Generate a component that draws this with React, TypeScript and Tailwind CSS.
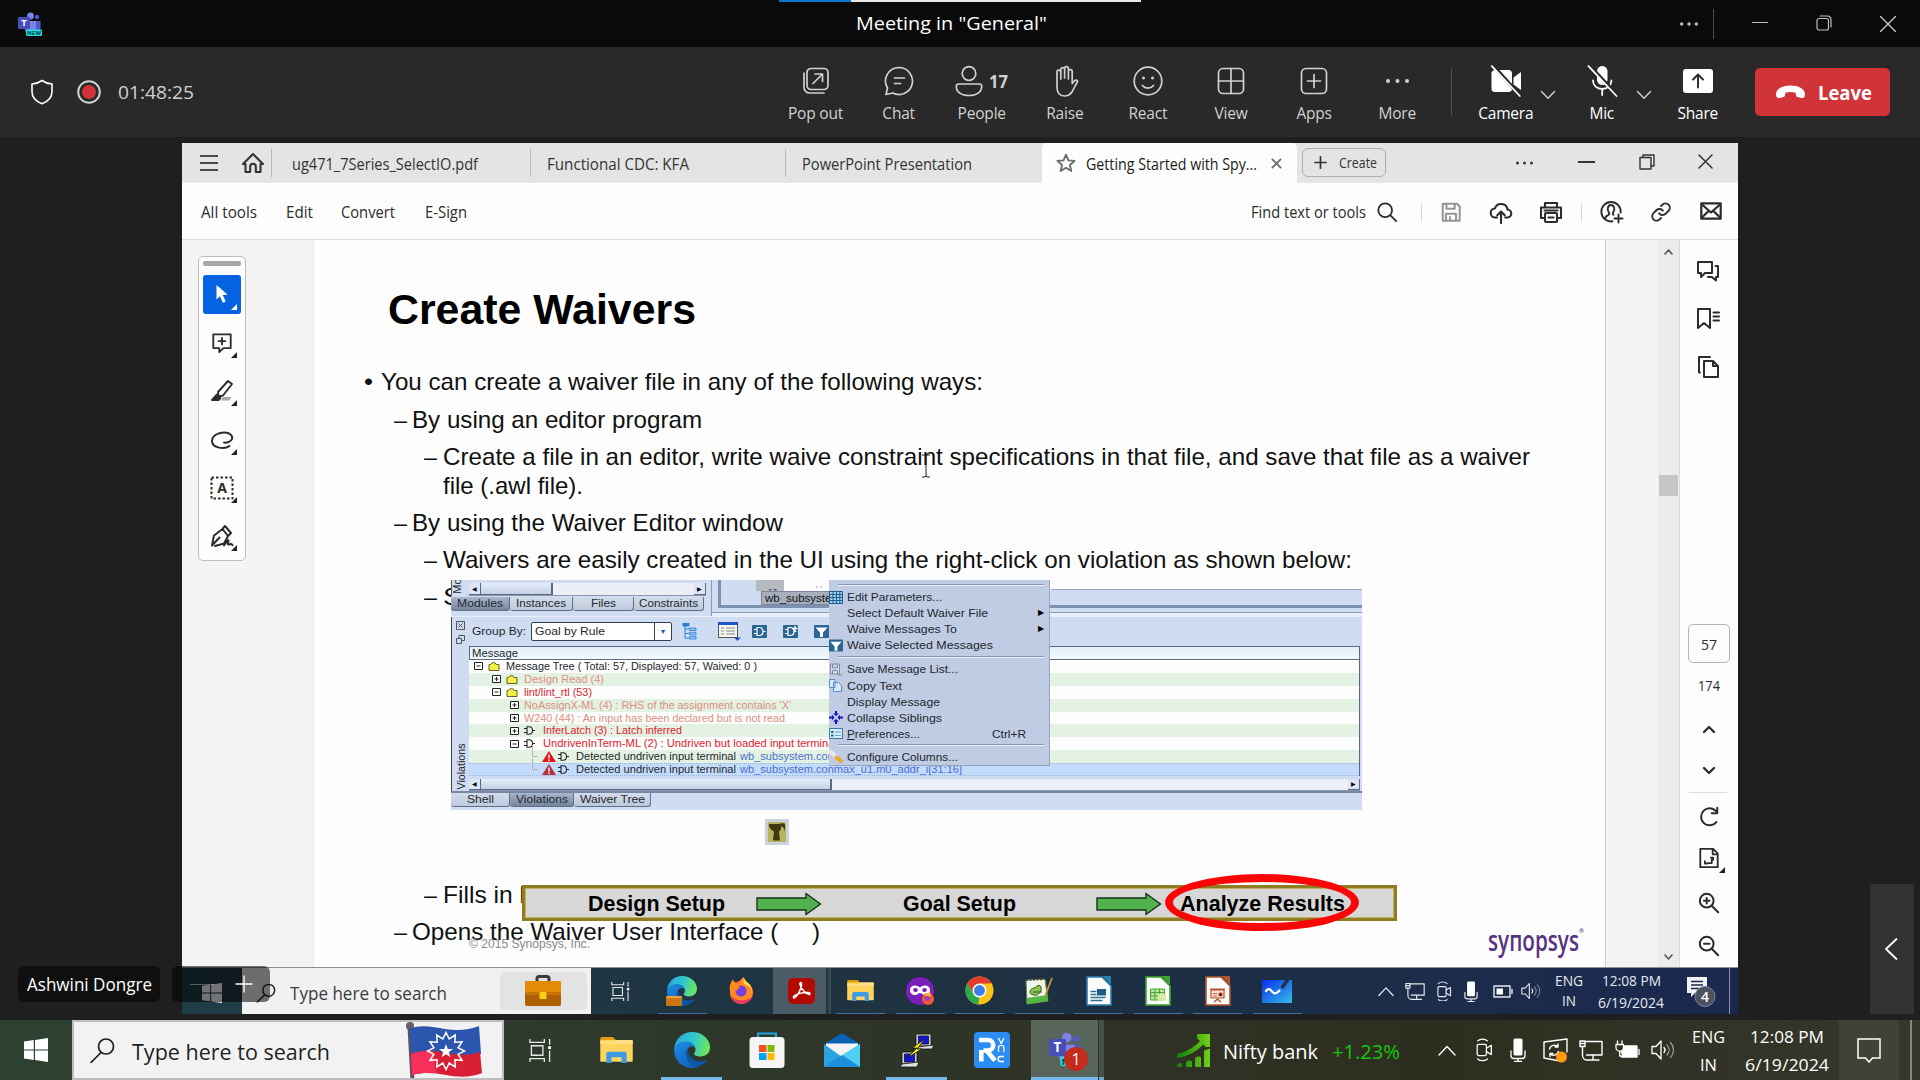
import React, { useLayoutEffect, useRef, useState } from "react";

type Kids = { children?: React.ReactNode };

/* One line of text set to an exact advance width. */
function Fit({ w, className = "", children }: { w: number; className?: string } & Kids) {
  const ref = useRef<HTMLSpanElement>(null);
  const [scale, setScale] = useState(1);
  useLayoutEffect(() => {
    if (!ref.current) return;
    const natural = parseFloat(getComputedStyle(ref.current).width);
    if (natural > 0) setScale(w / natural);
  }, [w]);
  return (
    <span className={`inline-block shrink-0 whitespace-pre ${className}`} style={{ width: w }}>
      <span ref={ref} className="inline-block origin-left" style={{ transform: `scaleX(${scale})` }}>
        {children}
      </span>
    </span>
  );
}

function Ico({
  w = 24,
  h,
  vb = "0 0 24 24",
  sw = 1.5,
  className = "",
  fill = "none",
  children,
}: { w?: number; h?: number; vb?: string; sw?: number; className?: string; fill?: string } & Kids) {
  return (
    <svg
      width={w}
      height={h ?? w}
      viewBox={vb}
      fill={fill}
      stroke="currentColor"
      strokeWidth={sw}
      strokeLinecap="round"
      strokeLinejoin="round"
      className={`shrink-0 ${className}`}
    >
      {children}
    </svg>
  );
}

const Dots = ({ w, r = 1.3, className = "" }: { w: number; r?: number; className?: string }) => (
  <Ico w={w} h={8} vb={`0 0 ${w} 8`} className={className}>
    <g fill="currentColor" stroke="none">
      <circle cx={r} cy="4" r={r} />
      <circle cx={w / 2} cy="4" r={r} />
      <circle cx={w - r} cy="4" r={r} />
    </g>
  </Ico>
);

/* ---------- Teams title bar ---------- */

function TeamsLogo({ w = 24 }: { w?: number }) {
  return (
    <svg width={w} height={w} viewBox="0 0 24 24" className="shrink-0">
      <circle cx="12.5" cy="4" r="3.4" fill="#7b83eb" />
      <circle cx="19" cy="5" r="2.2" fill="#5059c9" />
      <path d="M15 9h7.500v9a3 3 0 0 1-3 3H15z" fill="#5059c9" />
      <path d="M7 9h11v8a5.500 5.500 0 0 1-11 0z" fill="#7b83eb" />
      <rect x="0" y="5" width="12" height="12" rx="1" fill="#464eb8" />
      <text x="6" y="14.400" textAnchor="middle" fontSize="9.500" fontWeight="700" fill="#fff" fontFamily="Open Sans, sans-serif">T</text>
      <rect x="8" y="17.500" width="16" height="6.500" rx="1.500" fill="#22e0e6" />
      <text x="16" y="23" textAnchor="middle" fontSize="6" fontWeight="700" fill="#03363d" fontFamily="Open Sans, sans-serif">NEW</text>
    </svg>
  );
}

function TitleBar() {
  return (
    <header className="relative flex h-[47px] items-center bg-[#0a0a0a] text-[#bdbdbd]">
      <div className="absolute left-[779px] top-0 flex h-[2px] w-[362px] bg-[#e6e6e6]">
        <div className="w-[72px] bg-[#0078d4]" />
      </div>
      <div className="ml-[18px]"><TeamsLogo /></div>
      <Fit w={191} className="ml-[814px] mb-px text-[19px] leading-6 text-white">Meeting in "General"</Fit>
      <Dots w={18} r={1.7} className="ml-[633px]" />
      <div className="ml-[15px] h-[30px] w-px bg-[#4a4a4a]" />
      <div className="ml-[38px] mb-[2px] h-[1.5px] w-4 bg-[#bdbdbd]" />
      <Ico w={16} vb="0 0 16 16" sw={1.2} className="ml-12 mb-px">
        <rect x="1" y="3.500" width="11.500" height="11.500" rx="2" />
        <path d="M4 1h7.500A3.500 3.500 0 0 1 15 4.500V12" />
      </Ico>
      <Ico w={16} vb="0 0 16 16" sw={1.2} className="ml-12 text-[#d0d0d0]"><path d="M.5.500l15 15M15.500.500l-15 15" /></Ico>
    </header>
  );
}

/* ---------- Meeting toolbar ---------- */

function Tool({ label, children, bright = false, wide = true }: { label: string; bright?: boolean; wide?: boolean } & Kids) {
  return (
    <div className={`flex h-full shrink-0 flex-col items-center pt-[18px] ${wide ? "w-[83.100px]" : "w-[60px]"} ${bright ? "text-white" : "text-[#d1d1d1]"}`}>
      <div className="flex h-8 items-center justify-center gap-2">{children}</div>
      <span className="mt-[4px] text-[15.500px] leading-6 tracking-[-0.200px] whitespace-nowrap">{label}</span>
    </div>
  );
}

const Chev = ({ className = "" }: { className?: string }) => (
  <Ico w={16} h={10} vb="0 0 16 10" sw={1.4} className={className}><path d="M1.500 1.500 8 8.200l6.500-6.700" /></Ico>
);

function MeetingBar() {
  return (
    <div className="flex h-[90px] items-center bg-[#292929] text-[#d1d1d1]">
      <Ico w={24} h={26} vb="0 0 24 26" sw={1.6} className="ml-[30px] text-white">
        <path d="M12 1.500c3 2.200 6.200 3.300 10 3.500v7.500c0 6-3.800 10-10 12.200C5.800 22.500 2 18.500 2 12.500V5c3.800-.2 7-1.300 10-3.500z" />
      </Ico>
      <Ico w={28} vb="0 0 28 28" sw={2} className="ml-[21px]">
        <circle cx="14" cy="14" r="10.800" />
        <circle cx="14" cy="14" r="7" fill="#d13438" stroke="none" />
      </Ico>
      <Fit w={76} className="ml-[15px] text-[19px] leading-6">01:48:25</Fit>
      <div className="w-[580px] shrink-0" />
      <Tool label="Pop out">
        <Ico w={30} vb="0 0 30 30" sw={1.700}>
          <rect x="6" y="2.500" width="21" height="21" rx="4" />
          <path d="M3 7v14.500a5.500 5.500 0 0 0 5.500 5.500H23M12 17.500l9-9M14 8h7.500v7.500" />
        </Ico>
      </Tool>
      <Tool label="Chat">
        <Ico w={32} vb="0 0 32 32" sw={1.700}>
          <path d="M16 2.500a13.500 13.500 0 1 1-6.200 25.500L3 29.500l1.500-6.500A13.500 13.500 0 0 1 16 2.500zM11.500 13h10M11.500 18.500h6" />
        </Ico>
      </Tool>
      <Tool label="People">
        <Ico w={28} h={32} vb="0 0 28 32" sw={1.700}>
          <circle cx="14" cy="8.500" r="6.800" />
          <path d="M3.500 19h21a2.200 2.200 0 0 1 2.200 2.200c0 6-5 9.300-12.700 9.300S1.300 27.200 1.300 21.200A2.200 2.200 0 0 1 3.500 19z" />
        </Ico>
        <Fit w={19} className="-ml-[2px] text-[18px] font-bold leading-6">17</Fit>
      </Tool>
      <Tool label="Raise">
        <Ico w={28} h={32} vb="0 0 28 32" sw={1.700}>
          <path d="M6 17V7a1.900 1.900 0 0 1 3.800 0v7M9.800 14V4.500a1.900 1.900 0 0 1 3.800 0V13M13.600 13V3.500a1.900 1.900 0 0 1 3.800 0V14M17.400 14V6.500a1.900 1.900 0 0 1 3.800 0V18.500M21.200 18.500l2.300-2.700c1.500-1.600 3.800-.2 2.600 1.700-2.400 4-3.600 7-5.200 9.500-2.100 3.300-4.700 4-7.400 4-5 0-7.500-3.500-7.500-9V15" />
        </Ico>
      </Tool>
      <Tool label="React">
        <Ico w={32} vb="0 0 32 32" sw={1.700}>
          <circle cx="16" cy="16" r="13.800" />
          <path d="M10.500 20.500c2.800 3.600 8.200 3.600 11 0" />
          <circle cx="11.500" cy="13" r="1.500" fill="currentColor" stroke="none" />
          <circle cx="20.500" cy="13" r="1.500" fill="currentColor" stroke="none" />
        </Ico>
      </Tool>
      <Tool label="View">
        <Ico w={28} vb="0 0 28 28" sw={1.700}><rect x="1.500" y="1.500" width="25" height="25" rx="4.500" /><path d="M14 1.500v25M1.500 14h25" /></Ico>
      </Tool>
      <Tool label="Apps">
        <Ico w={28} vb="0 0 28 28" sw={1.700}><rect x="1.500" y="1.500" width="25" height="25" rx="4.500" /><path d="M14 7.500v13M7.500 14h13" /></Ico>
      </Tool>
      <Tool label="More"><Dots w={23} r={2} /></Tool>
      <div className="ml-3 h-12 w-px shrink-0 bg-[#525252]" />
      <div className="w-6 shrink-0" />
      <Tool label="Camera" bright wide={false}>
        <Ico w={32} vb="0 0 32 32" sw={1.800}>
          <path d="M4 5h14.500A3.500 3.500 0 0 1 22 8.500v15a3.500 3.500 0 0 1-3.500 3.500H5a3.500 3.500 0 0 1-3.500-3.500V7z" fill="currentColor" stroke="none" />
          <path d="M23.500 12.500 31 7v18l-7.500-5.500z" fill="currentColor" stroke="none" />
          <path d="M3.500 1 31 31.500" stroke="#292929" strokeWidth="3.500" />
          <path d="M1.800 1.200 29.800 31" />
        </Ico>
      </Tool>
      <Chev className="ml-1 mt-[6px]" />
      <div className="w-4 shrink-0" />
      <Tool label="Mic" bright wide={false}>
        <Ico w={32} vb="0 0 32 32" sw={1.800}>
          <rect x="11" y="1" width="10.500" height="19" rx="5.200" fill="currentColor" stroke="none" />
          <path d="M7 15.500c0 5 4 8.500 9.200 8.500s9.200-3.500 9.200-8.500M16.200 24v6" />
          <path d="M4 1 32 31" stroke="#292929" strokeWidth="3.500" />
          <path d="M2.500 1.200 30.500 31" />
        </Ico>
      </Tool>
      <Chev className="ml-1 mt-[6px]" />
      <div className="w-[16px] shrink-0" />
      <Tool label="Share" bright wide={false}>
        <Ico w={32} h={26} vb="0 0 32 26" sw={1.900}>
          <rect x="1" y="1" width="30" height="24" rx="3" fill="currentColor" stroke="none" />
          <path d="M16 19.500V6.500M11 11.500l5-5 5 5" stroke="#292929" />
        </Ico>
      </Tool>
      <div className="ml-[27px] flex h-12 w-[135px] shrink-0 items-center rounded-[5px] bg-[#d13438] pl-5 text-white">
        <Ico w={31} h={16} vb="0 0 31 16">
          <path d="M15.500 1.500C8 1.500 1 4.500 1 10.200c0 3 1.400 4 3.500 3.700l3.200-.6c1.800-.3 2.500-1.400 2.500-3V8.700c3.400-1 7.200-1 10.600 0v1.600c0 1.600.7 2.700 2.500 3l3.200.6c2.100.3 3.500-.7 3.500-3.700 0-5.700-7-8.700-14.500-8.700z" fill="currentColor" stroke="none" />
        </Ico>
        <Fit w={54} className="ml-3 mt-px text-[19px] font-bold leading-6">Leave</Fit>
      </div>
    </div>
  );
}

/* ---------- PDF reader chrome ---------- */

const Sep = ({ className = "" }: { className?: string }) => <div className={`w-px shrink-0 bg-[#b9b9b9] ${className}`} />;

function PdfTabs() {
  return (
    <div className="flex h-10 items-center border-b border-[#e9e9e9] bg-[#e4e4e4] text-[16px] leading-6 text-[#333]">
      <div className="ml-[18px] flex w-[18px] flex-col gap-[5px]">
        <div className="h-[2px] bg-[#4a4a4a]" /><div className="h-[2px] bg-[#4a4a4a]" /><div className="h-[2px] bg-[#4a4a4a]" />
      </div>
      <Ico w={24} h={22} vb="0 0 24 22" sw={2.100} className="ml-[23px]">
        <path d="M12 2 2 12h2.500v8h4.700v-5.500a2.800 2.800 0 0 1 5.600 0V20h4.700v-8H22z" />
      </Ico>
      <Sep className="ml-[6px] h-7" />
      <Fit w={186} className="ml-[20px] mt-[2px]">ug471_7Series_SelectIO.pdf</Fit>
      <Sep className="ml-[52px] h-7" />
      <Fit w={142} className="ml-[16px] mt-[2px]">Functional CDC: KFA</Fit>
      <Sep className="ml-[96px] h-7" />
      <Fit w={170} className="ml-[16px] mt-[2px]">PowerPoint Presentation</Fit>
      <div className="ml-[70px] -mb-[2px] flex h-10 w-[255px] shrink-0 items-center self-start rounded-t-[5px] bg-[#fdfdfd] pl-[14px] text-[#1c1c1c]">
        <Ico w={20} vb="0 0 24 24" sw={2.200} className="text-[#6b6b6b]">
          <path d="m12 2 2.900 6.900 7.400.6-5.600 4.900 1.700 7.300L12 17.800l-6.400 3.900 1.700-7.300-5.600-4.900 7.400-.6z" />
        </Ico>
        <Fit w={171} className="ml-[10px] mt-px">Getting Started with Spy...</Fit>
        <Ico w={11} vb="0 0 12 12" sw={2} className="ml-[14px] text-[#6b6b6b]"><path d="m1.500 1.500 9 9M10.500 1.500l-9 9" /></Ico>
      </div>
      <div className="ml-[5px] flex h-[29px] w-[84px] shrink-0 items-center rounded-[6px] border border-[#aeaeae] pl-[11px]">
        <Ico w={13} vb="0 0 12 12" sw={1.600}><path d="M6 .8v10.400M.8 6h10.400" /></Ico>
        <Fit w={38} className="ml-[12px] text-[14px] leading-5">Create</Fit>
      </div>
      <Dots w={17} r={1.500} className="ml-[130px]" />
      <div className="ml-[45px] mb-px h-[1.500px] w-[17px] shrink-0 bg-[#333]" />
      <Ico w={16} vb="0 0 16 16" sw={1.400} className="ml-[44px] mb-[2px]"><rect x="1" y="3.500" width="11" height="11.500" /><path d="M4 3.500V1h11v11h-3" /></Ico>
      <Ico w={15} vb="0 0 15 15" sw={1.500} className="ml-[43px] mb-[3px]"><path d="m1 1 13 13M14 1 1 14" /></Ico>
    </div>
  );
}

function PdfToolbar() {
  return (
    <div className="flex h-[57px] items-center border-b border-[#dcdcdc] bg-[#fdfdfd] pt-[2px] text-[15.500px] leading-6 text-[#2c2c2c]">
      <Fit w={56} className="ml-[19px]">All tools</Fit>
      <Fit w={27} className="ml-[29px]">Edit</Fit>
      <Fit w={54} className="ml-[28px]">Convert</Fit>
      <Fit w={42} className="ml-[30px]">E-Sign</Fit>
      <Fit w={115} className="ml-[784px]">Find text or tools</Fit>
      <Ico w={22} sw={2} className="ml-[10px]"><circle cx="10" cy="10" r="7.500" /><path d="m15.500 15.500 6.500 6.500" /></Ico>
      <Sep className="ml-[23px] h-[19px] bg-[#d8d8d8]" />
      <Ico w={22} sw={2.200} className="ml-[18px] text-[#959595]"><path d="M3 3h15.500L21.500 6v15.500h-18.500zM7 3v5.500h9V3M6.500 21.500V14h11v7.500M11 17.500v4" /></Ico>
      <Ico w={24} sw={2.100} className="ml-[27px]">
        <path d="M8 17.500H6.500a4.500 4.500 0 0 1-.6-9A6.500 6.500 0 0 1 18.500 9.500a4 4 0 0 1-.5 8h-1.800M12 23V12M8.300 15.200 12 11.500l3.700 3.700" />
      </Ico>
      <Ico w={24} sw={2.100} className="ml-[26px]"><path d="M6 7V3h12v4M6 18H2V7.500h20V18h-4" /><rect x="6" y="13" width="12" height="9" rx="1" /><path d="M9.500 17.500h5M5.500 10.500h13" /></Ico>
      <Sep className="ml-[18px] h-[19px] bg-[#d8d8d8]" />
      <Ico w={24} sw={1.900} className="ml-[18px]">
        <path d="M12.500 21.300A9.700 9.700 0 1 1 20.700 12.500M5 18.500c.6-2.200 2-3.200 3.600-3.700.9-.3.9-1.300.3-2.200C6.500 9 8 5 11 5s4.500 4 2.200 7.500c-.6 1-.6 2 .3 2.300M18.500 14.500v8M14.500 18.500h8" />
      </Ico>
      <Ico w={22} sw={2.100} className="ml-[26px]">
        <path d="M10 13.500a4.800 4.800 0 0 0 7 .4l3.200-3.200a4.700 4.700 0 0 0-6.700-6.700L12 5.500M14 10.500a4.800 4.800 0 0 0-7-.4l-3.200 3.200a4.700 4.700 0 0 0 6.700 6.700L12 18.500" />
      </Ico>
      <Ico w={22} h={18} vb="0 0 22 18" sw={2.200} className="ml-[28px] mb-[2px]"><rect x="1.300" y="1.300" width="19.400" height="15.400" /><path d="m2 2.500 9 8 9-8M2 15.500l6.500-6.500M20 15.500 13.500 9" /></Ico>
    </div>
  );
}

const Corner = ({ light = false }: { light?: boolean }) => (
  <svg width="6" height="6" viewBox="0 0 6 6" className={`absolute ${light ? "right-[4px] bottom-[4px]" : "right-[4px] bottom-[9px]"}`}><path d="M6 0v6H0z" fill={light ? "#fff" : "#222"} /></svg>
);

function Palette() {
  const cell = "relative flex h-[48.500px] w-[38px] items-center justify-center";
  return (
    <div className="ml-4 mt-[16px] flex h-[305px] w-12 flex-col items-center rounded-[5px] border border-[#bdbdbd] bg-[#fdfdfd] pt-1 text-[#2c2c2c]">
      <div className="h-[5px] w-[38px] rounded-[2px] bg-[#a6a6a6]" />
      <div className="relative mt-[9px] mb-[5px] flex h-[39px] w-[38px] shrink-0 items-center justify-center rounded-[3px] bg-[#0562e0]">
        <svg width="14" height="20" viewBox="0 0 14 20"><path d="M1.500 1v14.500l3.400-3.200 3 6.500 2.800-1.300-3-6.400 5-.3z" fill="#fff" /></svg>
        <Corner light />
      </div>
      <div className={cell}>
        <Ico w={22} sw={2}><path d="M2.500 2.500h19v15h-8l-4.500 4.500V17.500H2.500zM12 6.500v7M8.500 10h7" /></Ico><Corner />
      </div>
      <div className={cell}>
        <Ico w={24} sw={1.900}><path d="M18 2 22 5 13 16.500l-4.500 1L8 13z" /><path d="M7 15.500 2 21h6.500l2-2z" fill="#2c2c2c" /><path d="M13 18h8.500l-2 3.500H11z" fill="#a8a8a8" stroke="none" /></Ico><Corner />
      </div>
      <div className={cell}>
        <Ico w={24} sw={2}><path d="M19.500 19C15 22.500 2 21.500 2 14 2 8 9 5.500 14.500 5.500S23 9 22 12s-5.500 4-8 3.500" /></Ico><Corner />
      </div>
      <div className={cell}>
        <Ico w={24}><rect x="1.500" y="1.500" width="21" height="21" strokeDasharray="2.500 2" strokeWidth="2" strokeLinecap="butt" />
          <text x="12" y="17" fontSize="14" fontWeight="700" textAnchor="middle" fill="#2c2c2c" stroke="none" fontFamily="Open Sans, sans-serif">A</text></Ico><Corner />
      </div>
      <div className={cell}>
        <Ico w={24} sw={2}><path d="M2 21.500 4 11.500 12.500 5l5.500 7-4 7.500-9 2.500M2 21.500l7.500-8M12.500 5 15 2l6 7-3 3M14 21.500c2-3 4-6 4.500-5 .5.800-1.500 4 0 4s2-1.500 4 .5" /></Ico><Corner />
      </div>
    </div>
  );
}

/* ---------- Slide ---------- */

function Line({ w, lead, indent, h, children, dash = "–", dashW = 13 }: { w: number; lead: string; indent?: string; h: string; dash?: string; dashW?: number } & Kids) {
  return (
    <div className={`flex ${h} ${lead}`}>
      {dash && <Fit w={dashW} className={indent}>{dash}</Fit>}
      <Fit w={w}>{children}</Fit>
    </div>
  );
}

function Gate({ c = "#222" }: { c?: string }) {
  return (
    <svg width="11" height="9" viewBox="0 0 11 9" className="shrink-0"><path d="M0 2.500h3M0 6.500h3M3 .7v7.600h2C7.500 8.300 8.500 6.500 8.500 4.500S7.500.7 5 .7zM8.500 4.500H11" fill="none" stroke={c} strokeWidth="1.100" /></svg>
  );
}
const Box = ({ plus = false }: { plus?: boolean }) => (
  <svg width="9" height="8" viewBox="0 0 9 8" className="shrink-0"><path d={plus ? "M.5.5h8v7h-8zM2.500 4h4M4.500 2v4" : "M.5.5h8v7h-8zM2.500 4h4"} fill="#fff" stroke="#222" /></svg>
);
const Folder = () => (
  <svg width="12" height="9" viewBox="0 0 12 9" className="shrink-0"><path d="M1 2.500h1.500L4 .8h3l1.200 1.700H11v6H1z" fill="#f4f04a" stroke="#55551a" strokeWidth=".9" /></svg>
);
const Warn = ({ c = "#e3161b" }: { c?: string }) => (
  <svg width="14" height="11" viewBox="0 0 14 11" className="shrink-0"><path d="M7 0l7 11H0z" fill={c} /><path d="M7 3.500v4M7 8.500v1.400" stroke="#fff" strokeWidth="1.400" /></svg>
);

function Scroll({ thumb, className }: { thumb: string; className: string }) {
  const btn = "flex w-3 shrink-0 items-center justify-center border-r border-b border-[#5c6b80] bg-[#dbe5f4] text-[6px] leading-none text-black";
  return (
    <div className={`flex border-b border-[#8996ab] bg-[#eceff5] ${className}`}>
      <div className={btn}>◀</div>
      <div className={`border-r-2 border-b border-[#5c6b80] bg-gradient-to-b from-[#e6eefa] to-[#c4d1e6] ${thumb}`} />
      <div className="grow" />
      <div className={btn}>▶</div>
    </div>
  );
}

function BottomTab({ w, text, tw, dark = false }: { w: string; text: string; tw: number; dark?: boolean }) {
  return (
    <div className={`flex h-[14px] shrink-0 justify-center rounded-b-[3px] border-r border-b border-[#5f6f86] leading-[13px] ${w} ${dark ? "bg-gradient-to-b from-[#a9b7cc] to-[#74869f]" : "bg-gradient-to-b from-[#d3dcea] to-[#bdcadd]"}`}>
      <Fit w={tw}>{text}</Fit>
    </div>
  );
}

function Row({ bg, pad, children }: { bg: string; pad: string } & Kids) {
  return <div className={`flex h-[12.900px] shrink-0 items-center ${bg} ${pad}`}>{children}</div>;
}

function MenuItem({ text, w, icon, arrow = false, keys }: { text: React.ReactNode; w: number; icon?: React.ReactNode; arrow?: boolean; keys?: string }) {
  return (
    <div className="flex h-[16.100px] items-center">
      <div className="flex w-[18px] shrink-0 items-center">{icon}</div>
      <Fit w={w}>{text}</Fit>
      {keys && <Fit w={34} className="ml-[72px]">{keys}</Fit>}
      {arrow && <span className="mr-[5px] ml-auto text-[8px] leading-none text-black">▶</span>}
    </div>
  );
}

const Funnel = ({ w = 15 }: { w?: number }) => (
  <svg width={w} height="13" viewBox="0 0 15 13" className="shrink-0"><rect width="15" height="13" rx="1" fill="#2b6692" /><path d="M1.500 2.500h12L9 7.500V12H6V7.500z" fill="#fff" /></svg>
);

const MenuSep = () => <div className="mr-[5px] ml-[9px] h-[2px] shrink-0 border-t border-[#8694b0] bg-[#edf2fb]" />;

function ContextMenu() {
  return (
    <div className="absolute top-0 left-[378px] flex h-[186px] w-[221px] flex-col border-r border-b border-[#95a3bc] bg-[#bfcce3] pt-1 text-[10.500px] leading-[14px] text-[#22272f]">
      <MenuSep />
      <div className="h-[3px] shrink-0" />
      <MenuItem w={95} text="Edit Parameters..." icon={<svg width="14" height="13" viewBox="0 0 14 13"><path d="M.5.5h13v12H.5zM.5 3.500h13M.5 6.500h13M.5 9.500h13M4 .5v12M7.500.5v12M10.800.5v12" fill="#9cd0f0" stroke="#1f5d8e" /></svg>} />
      <MenuItem w={141} text="Select Default Waiver File" arrow />
      <MenuItem w={110} text="Waive Messages To" arrow />
      <MenuItem w={146} text="Waive Selected Messages" icon={<Funnel w={14} />} />
      <div className="h-[3px] shrink-0" /><MenuSep /><div className="h-[3px] shrink-0" />
      <MenuItem w={111} text="Save Message List..." icon={<svg width="14" height="13" viewBox="0 0 14 13"><path d="M1.500 1h9v10h-9zM3.500 1v4h5V1M3.500 11V7.500h5V11M9 12h4" fill="#d4dcea" stroke="#7d8aa2" /></svg>} />
      <MenuItem w={55} text="Copy Text" icon={<svg width="14" height="13" viewBox="0 0 14 13"><path d="M.5.500H6v8H.5zM4.500 3.500h5l3 3v6h-8z" fill="#d8e8fc" stroke="#5c8ccc" /></svg>} />
      <MenuItem w={93} text="Display Message" />
      <MenuItem w={95} text="Collapse Siblings" icon={<svg width="14" height="13" viewBox="0 0 14 13"><path d="M7 5 4 2.500h2V0h2v2.500h2zM7 8l-3 2.500h2V13h2v-2.500h2zM5.500 6.500 3 3.800v1.700H0v2h3v1.700zM8.500 6.500 11 3.800v1.700h3v2h-3v1.700z" fill="#1313c8" /></svg>} />
      <MenuItem w={73} text={<><u>P</u>references...</>} keys="Ctrl+R" icon={<svg width="14" height="11" viewBox="0 0 14 11"><rect x=".5" y=".5" width="13" height="10" fill="#d5ecfa" stroke="#3b78a8" /><path d="M2 3h2.500v2H2zM2 6.500h2.500v2H2z" fill="#2b6692" /><path d="M6 4h6M6 7.500h6" stroke="#6aa6cd" /></svg>} />
      <div className="h-[2px] shrink-0" /><MenuSep /><div className="h-[3px] shrink-0" />
      <MenuItem w={111} text="Configure Columns..." icon={<svg width="14" height="13" viewBox="0 0 14 13"><path d="M2 2l5 5" stroke="#e5e8ee" strokeWidth="4" strokeLinecap="round" /><path d="M7.500 7.500 12 11" stroke="#eda72b" strokeWidth="4" strokeLinecap="round" /></svg>} />
    </div>
  );
}

function Figure() {
  const red = "text-[#e0222c]";
  const pink = "text-[#dd8f7d]";
  return (
    <div className="absolute top-[340px] left-[137px] h-[230px] w-[911px] overflow-hidden bg-[#cfdcf1] text-[10.500px] leading-[13px] text-[#24282e]">
      <div className="flex h-[36px]">
        <div className="flex w-[257px] shrink-0 flex-col">
          <div className="flex h-4">
            <div className="flex w-[18px] justify-center overflow-hidden border-l border-[#555] text-[11px]"><span className="-mt-1 -rotate-90">Mo</span></div>
            <Scroll thumb="w-[72px]" className="mt-[3px] mb-0 w-[237px]" />
          </div>
          <div className="flex pt-px">
            <BottomTab w="w-[59px]" text="Modules" tw={46} dark />
            <BottomTab w="w-[63px]" text="Instances" tw={50} />
            <BottomTab w="w-[61px]" text="Files" tw={25} />
            <BottomTab w="w-[70px]" text="Constraints" tw={59} />
          </div>
        </div>
        <div className="ml-[3px] flex grow flex-col border-l border-[#8c9bb3]">
          <div className="ml-[6px] flex h-[28px] border-b-[3px] border-l-[3px] border-[#7d91b0]">
            <div className="flex h-full w-[330px] bg-[#cfdcf1]">
              <div className="h-full w-[35px]" />
              <div className="flex h-full grow flex-col bg-[#fdfdfd]">
                <div className="flex h-[11px] text-[8px] leading-[9px]">
                  <div className="w-[28px] overflow-hidden bg-[#b6b9be] pt-[7px] pl-3">17</div>
                  <span className="ml-[32px] text-[#3a3ae0] italic">, ,</span>
                </div>
                <div className="h-[15px] bg-[#cfdcf1] pl-[5px]"><div className="flex h-[14px] w-[76px] items-center border border-[#7b8799] bg-[#a7afbd] pl-[3px] text-[#111]"><Fit w={76}>wb_subsystem</Fit></div></div>
              </div>
            </div>
            <div className="flex grow flex-col"><div className="h-[10px] border-b border-[#94a4bb] bg-[#fdfdfd]" /></div>
          </div>
          <div className="mt-[4px] h-[4px] border-t border-[#8c9bb3] bg-[#e9f0fb]" />
        </div>
      </div>
      <div className="flex h-[175px] border-t border-[#e9f0fb] border-b-[#6f8098]">
        <div className="flex w-[18px] shrink-0 flex-col items-center border-l border-[#444] pt-[4px] text-[#444]">
          <svg width="9" height="9" viewBox="0 0 9 9"><path d="M.5.5h8v8h-8zM2.500 2.500l4 4M6.500 2.500l-4 4" fill="none" stroke="#555" /></svg>
          <svg width="9" height="9" viewBox="0 0 9 9" className="mt-[5px]"><path d="M.5 3.500h5v5h-5zM3 3.500V.5h5.500v5H6" fill="none" stroke="#555" /></svg>
          <div className="mt-[99px] flex h-[46px] w-3 items-center justify-center"><div className="-rotate-90"><Fit w={46} className="text-[10.500px] text-[#222]">Violations</Fit></div></div>
        </div>
        <div className="flex w-[891px] flex-col">
          <div className="flex h-[29px] shrink-0 items-center pl-[3px]">
            <Fit w={54}>Group By:</Fit>
            <div className="ml-[5px] flex h-[19px] w-[141px] items-center rounded-[2px] border border-[#333f52] bg-white pl-[3px]">
              <Fit w={70}>Goal by Rule</Fit>
              <div className="ml-auto flex h-full w-[17px] items-center justify-center border-l border-[#333f52] text-[7px] text-[#1849c8]">▼</div>
            </div>
            <svg width="16" height="17" viewBox="0 0 16 17" className="ml-[9px]"><path d="M2 0h6v3H2zM4 3v12M4 6h4M4 10.500h4M4 15h4" stroke="#2c7fd6" fill="#2c7fd6" /><path d="M8.500 5H15v2.500H8.500zM8.500 9.300H15v2.500H8.500zM8.500 13.500H15V16H8.500z" fill="#8fc4f3" stroke="#2c7fd6" strokeWidth=".8" /></svg>
            <svg width="23" height="19" viewBox="0 0 23 19" className="ml-[21px]"><rect x=".5" y=".5" width="19" height="15" fill="#f6f6f0" stroke="#555" /><rect width="20" height="3" fill="#1f55c4" /><path d="M3 6h3M3 9h3M3 12h3M8 6h9M8 9h9M8 12h9" stroke="#888" /><path d="M16 15.500h7L19.500 19z" fill="#1f55c4" /></svg>
            {[0, 1].map((k) => (
              <svg key={k} width="15" height="13" viewBox="0 0 15 13" className={k ? "ml-[16px]" : "ml-[11px]"}><rect width="15" height="13" rx="1" fill="#2b6692" /><path d="M2 4.500h3M2 8.500h3M5 2.500v8h2c3 0 4-2 4-4s-1-4-4-4zM11 6.500h2.500" fill="none" stroke="#fff" strokeWidth="1.200" />{k === 1 && <path d="M12 1v5M9.500 3.500h5" stroke="#fff" strokeWidth="1.400" />}</svg>
            ))}
            <div className="ml-[16px]"><Funnel /></div>
          </div>
          <div className="flex h-[14px] shrink-0 items-center border border-[#5a6a80] bg-gradient-to-b from-[#e2eef8] to-[#f4fbff] pl-[2px]"><Fit w={46}>Message</Fit></div>
          <div className="flex h-[116px] shrink-0 flex-col border-r border-[#5a6a80]">
            <Row bg="bg-[#fdfdfd]" pad="pl-[5px]"><Box /><div className="w-[5px]" /><Folder /><Fit w={251} className="ml-[6px]">Message Tree ( Total: 57, Displayed: 57, Waived: 0 )</Fit></Row>
            <Row bg="bg-[#e4f2e4]" pad="pl-[23px]"><Box plus /><div className="w-[5px]" /><Folder /><Fit w={80} className={`ml-[6px] ${pink}`}>Design Read (4)</Fit></Row>
            <Row bg="bg-[#fdfdfd]" pad="pl-[23px]"><Box /><div className="w-[5px]" /><Folder /><Fit w={68} className={`ml-[6px] ${red}`}>lint/lint_rtl (53)</Fit></Row>
            <Row bg="bg-[#e4f2e4]" pad="pl-[41px]"><Box plus /><Fit w={267} className={`ml-[5px] ${pink}`}>NoAssignX-ML (4) : RHS of the assignment contains 'X'</Fit></Row>
            <Row bg="bg-[#fdfdfd]" pad="pl-[41px]"><Box plus /><Fit w={261} className={`ml-[5px] ${pink}`}>W240 (44) : An input has been declared but is not read</Fit></Row>
            <Row bg="bg-[#e4f2e4]" pad="pl-[41px]"><Box plus /><div className="w-[5px]" /><Gate /><Fit w={139} className={`ml-[8px] ${red}`}>InferLatch (3) : Latch inferred</Fit></Row>
            <Row bg="bg-[#fdfdfd]" pad="pl-[41px]"><Box /><div className="w-[5px]" /><Gate /><Fit w={294} className={`ml-[8px] ${red}`}>UndrivenInTerm-ML (2) : Undriven but loaded input terminal</Fit></Row>
            {["bg-[#e4f2e4]", "bg-[#c3dcfb] border-y border-dotted border-[#9ab6d8]"].map((bg, k) => (
              <Row key={bg} bg={bg} pad="pl-[63px]">
                <div className="-mt-3 h-3 w-[6px] shrink-0 border-b border-l border-[#b5b5b5]" />
                <div className="w-[4px]" /><Warn c={k ? "#b8313f" : "#e3161b"} /><div className="w-[2px]" /><Gate />
                <Fit w={160} className="ml-[7px]">Detected undriven input terminal</Fit>
                <Fit w={222} className="ml-[4px] text-[#4a6fd0]">wb_subsystem.conmax_u1.m0_addr_i[31:16]</Fit>
              </Row>
            ))}
          </div>
          <Scroll thumb="w-[351px]" className="mt-[3px] h-3 w-full shrink-0" />
        </div>
      </div>
      <div className="flex border-t-2 border-[#7487a3]">
        <BottomTab w="w-[59px]" text="Shell" tw={27} />
        <BottomTab w="w-[64px]" text="Violations" tw={52} dark />
        <BottomTab w="w-[77px]" text="Waiver Tree" tw={65} />
      </div>
      <ContextMenu />
    </div>
  );
}

const GreenArrow = ({ className }: { className: string }) => (
  <svg width="66" height="24" viewBox="0 0 66 24" className={`shrink-0 ${className}`}><path d="M1 6h49V1.500L64.500 12 50 22.500V18H1z" fill="#52b04f" stroke="#16331a" strokeWidth="1.400" /></svg>
);

function Slide() {
  return (
    <div className="relative h-full w-[1292px] shrink-0 overflow-hidden border-l border-[#e9e9e9] bg-[#fdfdfd] font-['Liberation_Sans',Arial,sans-serif] text-[24px] leading-[30px] text-[#111]">
      <h1 className="mt-[45px] ml-[74px] h-12 text-[43px] leading-[48px] font-bold text-black"><Fit w={308}>Create Waivers</Fit></h1>
      <div className="h-[34px]" />
      <Line h="h-[38px]" lead="gap-[8px] pl-[50px]" dash="•" dashW={9} w={602}>You can create a waiver file in any of the following ways:</Line>
      <Line h="h-[37px]" lead="gap-[5px] pl-[80px]" w={290}>By using an editor program</Line>
      <Line h="h-[29px]" lead="gap-[6px] pl-[110px]" w={1087}>Create a file in an editor, write waive constraint specifications in that file, and save that file as a waiver</Line>
      <Line h="h-[37px]" lead="pl-[129px]" dash="" w={140}>file (.awl file).</Line>
      <Line h="h-[37px]" lead="gap-[5px] pl-[80px]" w={371}>By using the Waiver Editor window</Line>
      <Line h="h-[37px]" lead="gap-[6px] pl-[110px]" w={909}>Waivers are easily created in the UI using the right-click on violation as shown below:</Line>
      <Line h="h-[298px]" lead="gap-[6px] pl-[110px]" w={56}>Sele</Line>
      <Line h="h-[37px]" lead="gap-[6px] pl-[110px]" w={82}>Fills in l</Line>
      <Line h="h-[30px]" lead="gap-[5px] pl-[80px]" w={408}>Opens the Waiver User Interface (     )</Line>

      <span className="absolute top-[696px] left-[155px] text-[13px] leading-4 text-[#8a8a8a]"><Fit w={121}>© 2015 Synopsys, Inc.</Fit></span>
      <Figure />
      <svg width="24" height="26" viewBox="0 0 24 26" className="absolute top-[579px] left-[451px]"><rect width="24" height="26" fill="#c9d3e0" /><rect x="3" y="3" width="18" height="20" fill="#b9b35c" /><path d="M4 5h10c3-1.500 6-1 6 1v6l-2-4-2-.500v3l-2 2 1 9H8l1-9-3-2-2-3z" fill="#3d3714" /></svg>
      <svg width="8" height="24" viewBox="0 0 8 24" className="absolute top-[214px] left-[608px]"><path d="M0 1h3l1 1 1-1h3M4 2v20M0 23h3l1-1 1 1h3" fill="none" stroke="#222" /></svg>
      <div className="absolute top-[645px] left-[208px] flex h-[36px] w-[875px] items-center border-[3px] border-[#8f7d22] bg-[#d7d7d7] pt-px text-[22px] leading-7 font-bold text-black outline-1 -outline-offset-4 outline-[#c2b163]">
        <Fit w={137} className="ml-[63px]">Design Setup</Fit>
        <GreenArrow className="ml-[31px]" />
        <Fit w={113} className="ml-[81px]">Goal Setup</Fit>
        <GreenArrow className="ml-[80px]" />
        <Fit w={165} className="ml-[18px]">Analyze Results</Fit>
      </div>
      <div className="absolute top-[634px] left-[851px] h-[57px] w-[194px] rounded-[50%] border-8 border-[#fb0606]" />
      <span className="absolute top-[684px] left-[1174px] flex font-['Open_Sans',sans-serif] text-[28px] leading-8 font-semibold text-[#563480]">
        <Fit w={91}>syпopsys</Fit>
        <span className="mt-[3px] text-[6px] leading-[8px]">®</span>
      </span>
    </div>
  );
}

function SidePanel() {
  return (
    <div className="flex w-[58px] shrink-0 flex-col items-center bg-[#fdfdfd] pt-[19px] pr-[2px] text-[16px] leading-6 text-[#2c2c2c]">
      <Ico w={24} sw={2}><path d="M2 3h14v11H9l-4 4v-4H2zM19.500 7H22v11h-2v3.500L16 18h-4" /></Ico>
      <Ico w={24} sw={2} className="mt-6"><path d="M2 2h12v19l-6-5-6 5zM17.500 5.500H23M17.500 9.500H23M17.500 13.500H23" /></Ico>
      <Ico w={24} sw={2} className="mt-6"><path d="M8 6h9l5 5v11H8zM17 6v5h5M4 17.500H3V2h11" /></Ico>
      <div className="mt-[245px] ml-[2px] flex h-[39px] w-[42px] shrink-0 items-center justify-center rounded-[5px] border border-[#b5b5b5]"><Fit w={16} className="text-[15px]">57</Fit></div>
      <span className="mt-[10px] ml-px text-[15px]"><Fit w={22}>174</Fit></span>
      <Ico w={14} h={9} vb="0 0 14 9" sw={2.300} className="mt-[28px] ml-[2px]"><path d="m2 7 5-5 5 5" /></Ico>
      <Ico w={14} h={9} vb="0 0 14 9" sw={2.300} className="mt-[32px] ml-[2px]"><path d="m2 2 5 5 5-5" /></Ico>
      <div className="mt-[17px] h-px w-[38px] shrink-0 bg-[#dedede]" />
      <Ico w={22} sw={2.200} className="mt-[13px] ml-[2px]"><path d="M19.500 5.500A9.300 9.300 0 1 0 20 17.500M21 2v6h-6" /></Ico>
      <div className="relative mt-[19px] ml-[2px] flex h-6 w-[38px] justify-center">
        <Ico w={22} sw={2}><path d="M2.500 2h14l5 5v15h-19zM16 2v6h5.500M14 11.500h2.500v2.500M10 18H7.500v-2.500M11 17.500h4v-4" /></Ico>
        <svg width="6" height="6" viewBox="0 0 6 6" className="absolute right-[3px] -bottom-[2px]"><path d="M6 0v6H0z" fill="#222" /></svg>
      </div>
      <Ico w={22} sw={2.200} className="mt-[21px] ml-[2px]"><circle cx="9.500" cy="9.500" r="7.500" /><path d="m15 15 7 7M9.500 6.500v6M6.500 9.500h6" /></Ico>
      <Ico w={22} sw={2.200} className="mt-[21px] ml-[2px]"><circle cx="9.500" cy="9.500" r="7.500" /><path d="m15 15 7 7M6.500 9.500h6" /></Ico>
    </div>
  );
}

/* ---------- Application icons ---------- */

const WinLogo = ({ w, c = "#fff" }: { w: number; c?: string }) => (
  <svg width={w} height={w} viewBox="0 0 24 24" className="shrink-0" fill={c}><path d="M0 3.400 9.800 2v9.500H0zM11 1.900 24 0v11.500H11zM0 12.500h9.800V22L0 20.600zM11 12.500h13V24l-13-1.900z" /></svg>
);
const TaskView = ({ w }: { w: number }) => (
  <svg width={w} height={w} viewBox="0 0 24 24" fill="none" stroke="#e8e8e8" strokeWidth="1.400" className="shrink-0"><path d="M1 0v3.500h15V0M1 24v-3.500h15V24M2.500 7h12v10h-12zM21.500 0v6M21.500 12v12" /><rect x="20" y="7.500" width="3" height="3" fill="#fff" stroke="none" /></svg>
);
const Explorer = ({ w }: { w: number }) => (
  <svg width={w} height={w * 0.8} viewBox="0 0 32 26" className="shrink-0"><path d="M0 1.500A1.500 1.500 0 0 1 1.500 0h11L15 2.500V6H0z" fill="#e29d0c" /><rect y="3" width="32" height="21.500" rx="1.200" fill="#ffd45e" /><path d="M0 4.500h14L16 3h15a1 1 0 0 1 1 1v3H0z" fill="#ffdf85" /><path d="M6 26v-9a2.500 2.500 0 0 1 2.500-2.500h15A2.500 2.500 0 0 1 26 17v9h-5v-6h-10v6z" fill="#3c9be6" /></svg>
);
const Edge = ({ w, id }: { w: number; id: string }) => (
  <svg width={w} height={w} viewBox="0 0 36 36" className="shrink-0">
    <defs>
      <linearGradient id={`${id}a`} x1="0" y1="0.300" x2="1" y2="0.500"><stop offset="0" stopColor="#2aa5e0" /><stop offset=".5" stopColor="#2fc6cf" /><stop offset="1" stopColor="#6ce85a" /></linearGradient>
      <linearGradient id={`${id}b`} x1="0" y1="0" x2="0.600" y2="1"><stop offset="0" stopColor="#1d8ee0" /><stop offset="1" stopColor="#0b63c4" /></linearGradient>
    </defs>
    <path d="M0 17C1 7 8.500 0 18 0c10.500 0 18 7.500 18 15 0 6-4 9.500-9.500 9.500-4 0-6.500-1.300-6.500-2.500 0-.8 1.500-1.500 1.500-4.500 0-4-4-7-9-7C6.500 10.500 1.500 13 0 17z" fill={`url(#${id}a)`} />
    <path d="M0 18C.5 12.500 6 9.500 11.500 9.500c5.500 0 9.500 3 10 7.500-1-2-3-3-5-2.500-2.500.8-4 3.500-4 7 0 6.500 5 14.500 11.500 13.500C21.500 36 19.500 36 18 36 8 36 0 28 0 18z" fill={`url(#${id}b)`} />
    <path d="M13.500 17c-1 1.500-1.300 3.500-1 5.500.7 6 6.500 9.500 12.500 9.500 4 0 7-1.500 8-3 .5-.6 0-1.200-.7-.9-8 3.500-17.300-.6-18.800-11.100z" fill="#124f9c" />
    <path d="M12.500 22c0 7 5 13 11.500 13 3.500-1.200 7-4 9-7-9 4.500-18.500 1-20.500-6z" fill="#0f55a6" />
  </svg>
);
const Firefox = ({ w }: { w: number }) => (
  <svg width={w} height={w} viewBox="0 0 28 28" className="shrink-0"><circle cx="14" cy="16" r="12" fill="#ff4f3f" /><path d="M2 14C1 8 4 4 5 2.500 6 5 8 6.500 11 6.500c1-3 3-5 5.500-6.500 0 3 2 4 5 7 4 4 4.500 10 3 13.500-2 5-7 7-10 7C7 27.500 2 22 2 14z" fill="#ff8a1e" /><path d="M16.500 0c0 3 2 4 5 7 4 4 4.500 10 3 13.500C26 12 22 9 18 8c-2-1.500-2.500-5-1.500-8z" fill="#ffe14a" /><path d="M3 18c1 6 6 9.500 11 9.500s9-2.500 10.500-7C21 25 6 27 3 18z" fill="#f0306a" /><circle cx="13.500" cy="14.500" r="5.800" fill="#7a3fe0" /><path d="M5 11c3-2 6-1.500 8 0-2 .5-3.500 1.500-3.500 3.500 0-1-3-1.500-4.500-3.500z" fill="#ff8a1e" /></svg>
);
const Chrome = ({ w }: { w: number }) => (
  <svg width={w} height={w} viewBox="0 0 30 30" className="shrink-0"><circle cx="15" cy="15" r="14.500" fill="#fbc116" /><path d="M2.400 7.800A14.500 14.500 0 0 1 27.600 7.800H15L8.800 18.600z" fill="#e33b2e" /><path d="M2.400 7.800 8.800 18.600c1.300 2.200 3.600 3.600 6.200 3.600L13.500 29.400A14.500 14.500 0 0 1 2.400 7.800z" fill="#2da94f" /><circle cx="15" cy="15" r="7.200" fill="#fff" /><circle cx="15" cy="15" r="5.600" fill="#3b7ee8" /></svg>
);
const Doc = ({ c, kind }: { c: string; kind: number }) => (
  <svg width="26" height="30" viewBox="0 0 26 30" className="shrink-0"><path d="M1 1h15l9 9v19H1z" fill="#fbfdfd" stroke={c} strokeWidth="1.600" /><path d="M16.500 0H25v9z" fill={c} />
    {kind === 0 && <g><path d="M4.500 15.500h6M4.500 18.500h6M4.500 21.500h15M4.500 24.500h12" stroke="#2f6f96" strokeWidth="1.400" /><rect x="11" y="13" width="9" height="6.500" fill="#1d5f86" /></g>}
    {kind === 1 && <g><path d="M5.500 13h14v11h-14zM5.500 16.500h14M5.500 20h14M10 13v11M14.500 13v11" fill="#b9e59d" stroke="#4fa636" /><rect x="13" y="18" width="8" height="7" fill="#dbe8a8" /></g>}
    {kind === 2 && <g><path d="M5 13h15M6 14h13v8H6zM12.500 22v1.500M9 26l3.500-3 3.500 3" fill="#f9e0d4" stroke="#b5532c" strokeWidth="1.200" /><path d="M8 17.500h4M8 20h4M14 17h3v3h-3z" stroke="#d0603a" /></g>}
  </svg>
);

/* ---------- Tray icons ---------- */

const Caret = ({ w = 18 }: { w?: number }) => <Ico w={w} h={11} vb="0 0 18 11" sw={1.400}><path d="m1 10 8-8.500 8 8.500" /></Ico>;
const CamTray = ({ w }: { w: number }) => (
  <Ico w={w} h={w * 1.300} vb="0 0 18 24" sw={1.300}><rect x="2" y="6.500" width="9.500" height="11.500" rx="1.500" /><path d="m11.500 10.500 5-3v9.500l-5-3M2.500 3C5 .5 10 .5 12.500 3M2.500 21.500c2.500 2.300 7.500 2.300 10 0" /></Ico>
);
const MicTray = ({ w }: { w: number }) => (
  <Ico w={w} h={w * 1.500} vb="0 0 16 24" sw={1.300}><rect x="3.500" y="0.500" width="9" height="17" rx="1.500" fill="#fff" stroke="none" /><path d="M1 13v4.500C1 19.500 2.500 20.500 4 20.500h8c1.500 0 3-1 3-3V13M8 20.500v3M4.500 23.500h7" /></Ico>
);
const NetTray = ({ w }: { w: number }) => (
  <Ico w={w} vb="0 0 24 24" sw={1.400}><path d="M6 3.500h17v13.500H7.500M3.500 9v8c0 3 2 5 4 5H20M14 17v5" /><path d="M1 3h5v5.500H1zM1 5.500h4" /></Ico>
);
const VolTray = ({ w }: { w: number }) => (
  <Ico w={w} vb="0 0 24 24" sw={1.300}><path d="M1 8.500h4L10 3v18L5 15.500H1z" /><path d="M13 9.500c1.300 1.500 1.300 3.500 0 5" /><path d="M16 7c2.800 3 2.800 7 0 10M19.500 4.500c4 4.500 4 10.500 0 15" opacity=".5" /></Ico>
);

/* ---------- Shared-screen taskbar ---------- */

const App1 = ({ children, line = true }: { line?: boolean } & Kids) => (
  <div className="flex h-full w-[59.500px] shrink-0 flex-col items-center justify-end">
    <div className="flex grow items-center">{children}</div>
    <div className={`h-px w-[49px] ${line ? "bg-[#3c74a4]" : ""}`} />
  </div>
);

function InnerTaskbar() {
  return (
    <div className="flex h-[47px] items-center border-t border-[#8b9296] bg-gradient-to-r from-[#203c46] via-[#1e3140] to-[#1b2850] text-[#e6eaee]">
      <div className="flex h-full w-[60px] shrink-0 items-center justify-center pt-1"><WinLogo w={20} c="#fff" /></div>
      <div className="flex h-full w-[348.500px] shrink-0 items-center bg-[#f1f1f1] text-[#3c3c3c]">
        <Ico w={20} vb="0 0 22 22" sw={1.600} className="ml-[14px] mt-1 text-[#222]"><circle cx="14" cy="8" r="6.500" /><path d="M9.500 13 1.500 21" /></Ico>
        <Fit w={157} className="mt-1 ml-[14px] text-[18.500px] leading-6">Type here to search</Fit>
        <div className="ml-auto mr-[4px] flex h-[38px] w-[87px] items-center justify-center rounded-[5px] bg-[#e3e3e3]">
          <svg width="38" height="32" viewBox="0 0 38 32"><path d="M13 6V3.500A2 2 0 0 1 15 1.500h8a2 2 0 0 1 2 2V6" fill="none" stroke="#3a3a3a" strokeWidth="3" /><rect x="1" y="6" width="36" height="25" rx="2" fill="#b06004" /><rect x="1" y="6" width="36" height="14" rx="2" fill="#e58a06" /><path d="M1 17h36v3H1z" fill="#c97205" /><rect x="15.500" y="17" width="7" height="7" rx="1" fill="#f8cf17" /></svg>
        </div>
      </div>
      <div className="mr-[3px] flex h-full w-[59px] shrink-0 items-center justify-center pt-px"><TaskView w={19} /></div>
      <App1><div className="relative"><Edge w={30} id="ie" /><div className="absolute -left-[1px] bottom-0 h-[10px] w-[16px] rounded-[1px] border-t-2 border-[#eda13a] bg-[#c97512]" /></div></App1>
      <App1 line={false}><Firefox w={27} /></App1>
      <div className="flex h-full w-[59.500px] shrink-0">
        <div className="ml-px flex h-full w-[53px] items-center justify-center bg-[#4b5c67] pl-1">
          <svg width="27" height="26" viewBox="0 0 27 26"><rect width="27" height="26" rx="5" fill="#b30b00" /><path d="M6 20c3-1 8-10 7.500-14.500-.5-1.500-2-1-1.500 1C13 11 18 16 21 16.500c1.500 0 1.200-1.800-.5-2C16 14 9 15.500 6 18c-1 1-.7 2 0 2z" fill="none" stroke="#fff" strokeWidth="1.500" /></svg>
        </div>
        <div className="ml-[2px] h-full w-[3px] bg-[#34464f]" />
      </div>
      <App1><Explorer w={27} /></App1>
      <App1><svg width="30" height="30" viewBox="0 0 30 30"><circle cx="15" cy="15" r="14" fill="#7a1fb8" /><path d="M5 14c0-5 6-6 10-2.500 4-3.500 10-2.500 10 2.500 0 4-3 5-5 5-2.500 0-3.500-2-5-2s-2.500 2-5 2c-2 0-5-1-5-5z" fill="#fff" /><ellipse cx="10.500" cy="14" rx="2.400" ry="2" fill="#7a1fb8" /><ellipse cx="19.500" cy="14" rx="2.400" ry="2" fill="#7a1fb8" /><circle cx="23" cy="23" r="6" fill="#f8572e" /><path d="M19 17l3 1 3-3 1 5-4 2z" fill="#ffb02e" /><circle cx="22.500" cy="22.500" r="2.600" fill="#8b45c9" /></svg></App1>
      <App1><Chrome w={29} /></App1>
      <App1><svg width="28" height="28" viewBox="0 0 28 28"><path d="M1 3l19-1 3 22-21 3z" fill="#f2f5ea" stroke="#6b8a4b" /><path d="M1 3l19-1" stroke="#444" strokeWidth="2" strokeDasharray="2 1.500" /><path d="M2 21l20-3 1 6-21 3z" fill="#53b840" /><path d="M5 14c2-4 5-2 7-5 3-2 5 1 4 4s-3 6-7 5-4-1-4-4zM8 15h9" fill="#8ac552" stroke="#2e5a1e" /><path d="M27 1 20 19" stroke="#c9963c" strokeWidth="1.800" /></svg></App1>
      <App1><Doc c="#2a7fae" kind={0} /></App1>
      <App1><Doc c="#3ea52f" kind={1} /></App1>
      <App1><Doc c="#b5532c" kind={2} /></App1>
      <App1><svg width="30" height="24" viewBox="0 0 30 24"><defs><linearGradient id="wb" x1="0" y1="0" x2="1" y2="1"><stop offset="0" stopColor="#0a2df0" /><stop offset="1" stopColor="#33bfe6" /></linearGradient></defs><rect y="1" width="30" height="23" fill="url(#wb)" /><path d="M4 12c3-4 5-1 6.500 1s4 2 7-1.500" fill="none" stroke="#fff" strokeWidth="2.200" strokeLinecap="round" /><path d="M26 0l-6 9" stroke="#28303c" strokeWidth="3.500" /></svg></App1>
      <div className="w-[71px] shrink-0" />
      <Caret w={16} />
      <div className="ml-[11px] shrink-0"><NetTray w={20} /></div>
      <div className="ml-[11px] shrink-0"><CamTray w={16} /></div>
      <div className="ml-[12px] shrink-0"><MicTray w={14} /></div>
      <Ico w={20} h={13} vb="0 0 20 13" sw={1.400} className="ml-[15px] mt-px"><rect x="1" y="1" width="16" height="11" /><path d="M19 4.500v4" /><rect x="3.500" y="3.500" width="6.500" height="6" fill="#fff" stroke="none" /></Ico>
      <div className="ml-[8px] shrink-0"><VolTray w={20} /></div>
      <div className="ml-[8px] flex w-[40px] shrink-0 flex-col items-center text-[14px] leading-[20.500px]"><Fit w={28}>ENG</Fit><Fit w={14}>IN</Fit></div>
      <div className="ml-[8px] flex w-[68px] shrink-0 flex-col items-center pt-px text-[14px] leading-[22px]"><Fit w={59}>12:08 PM</Fit><Fit w={66}>6/19/2024</Fit></div>
      <div className="relative ml-[21px] mt-[2px] shrink-0">
        <svg width="32" height="32" viewBox="0 0 32 32" className="block"><path d="M1 1h20v16H9l-4 4v-4H1z" fill="#f1f3f5" /><path d="M5 5.500h12M5 9h12M5 12.500h8" stroke="#1b2a4e" strokeWidth="1.400" /><circle cx="19" cy="20.500" r="10" fill="#4a5260" stroke="#7e8590" /><text x="19" y="25.500" textAnchor="middle" fontSize="14" fontWeight="600" fill="#fff" fontFamily="Open Sans, sans-serif">4</text></svg>
      </div>
      <div className="ml-[11px] h-full w-px bg-[#8a93a5]" />
    </div>
  );
}

/* ---------- Host taskbar ---------- */

const App2 = ({ children, line = false }: { line?: boolean } & Kids) => (
  <div className="flex h-full w-[75px] shrink-0 flex-col items-center justify-end">
    <div className="flex grow items-center pt-[3px]">{children}</div>
    <div className={`h-[3px] w-[61px] ${line ? "bg-[#76b9ed]" : ""}`} />
  </div>
);

/* Twelve-pointed outline star centred on (cx, cy). */
function burst(cx: number, cy: number, outer: number, inner: number) {
  return Array.from({ length: 24 }, (_, i) => {
    const r = i % 2 ? inner : outer;
    const a = (Math.PI / 12) * i - Math.PI / 2;
    return `${(cx + r * Math.cos(a)).toFixed(1)},${(cy + r * Math.sin(a)).toFixed(1)}`;
  }).join(" ");
}

function Flag() {
  return (
    <svg width="80" height="60" viewBox="0 0 80 60" className="shrink-0">
      <path d="M4.500 6l3 54" stroke="#5d5060" strokeWidth="4" />
      <circle cx="5" cy="5" r="4" fill="#6a5a6a" />
      <path d="M4 8c12-5 24-2 36 0 13 2 24 1 34-3l2 28c-13 5-24 2-36 0-12-2-22-2-33 3z" fill="#2c55ae" />
      <path d="M6 33c12-5 24-3 35-1 12 2 22 3 34-1l2 21c-12 5-24 4-36 2-12-2-22-3-34 0z" fill="#d81f35" />
      <path d="M6 33c8-3 15-3 22-3l3 22c-8-.5-16 0-24 2z" fill="#f6305a" />
      <polygon points={burst(41, 30, 18.500, 12.500)} fill="none" stroke="#fff" strokeWidth="1.500" />
      <polygon points="41,23 42.800,28.100 48,28.100 43.800,31.200 45.400,36.200 41,33.200 36.600,36.200 38.200,31.200 34,28.100 39.200,28.100" fill="#fff" />
    </svg>
  );
}

function HostTaskbar() {
  return (
    <footer className="flex h-[60px] items-center bg-gradient-to-r from-[#2d4133] via-[#2e2e20] via-75% to-[#35372b] text-white">
      <div className="flex w-[72px] shrink-0 justify-center"><WinLogo w={24} /></div>
      <div className="flex h-full w-[432px] shrink-0 items-center overflow-hidden border-2 border-[#bfbcc0] bg-[#f2f2f2] text-[#1f1f1f]">
        <Ico w={25} vb="0 0 25 25" sw={1.700} className="ml-[16px]"><circle cx="16" cy="8.500" r="7.500" /><path d="M11 14.500 1 24.500" /></Ico>
        <Fit w={198} className="mt-1 ml-[17px] text-[21px] leading-7">Type here to search</Fit>
        <div className="mt-px ml-[75px]"><Flag /></div>
      </div>
      <div className="flex w-[72px] shrink-0 justify-center"><TaskView w={23} /></div>
      <div className="w-[3px] shrink-0" />
      <App2><Explorer w={33} /></App2>
      <App2 line><Edge w={36} id="he" /></App2>
      <App2><svg width="36" height="36" viewBox="0 0 36 36"><path d="M9 6V1.500h18V6" fill="none" stroke="#1fa4e0" strokeWidth="2.200" /><rect x=".5" y="5" width="35" height="31" rx="3.500" fill="#f5f5f5" /><path d="M10 13h7.500v7H10z" fill="#f25022" /><path d="M18.500 13h7v7h-7z" fill="#7fba00" /><path d="M10 21h7.500v7H10z" fill="#00a4ef" /><path d="M18.500 21h7v7h-7z" fill="#ffb900" /></svg></App2>
      <App2><svg width="36" height="34" viewBox="0 0 36 34"><path d="M0 11 18 0l18 11H0z" fill="#0b62b5" /><path d="M2 10.500h32V24H2z" fill="#f4f4f4" /><path d="M0 11v23h36V11L20 22.500c-1 .8-3 .8-4 0z" fill="#2aa3e0" /><path d="M36 11v23L18 22z" fill="#4fd0fa" /><path d="M0 34 18 22l18 12z" fill="#1c8fd8" /></svg></App2>
      <App2 line><svg width="36" height="36" viewBox="0 0 36 36"><g stroke="#111" strokeWidth=".8"><path d="M17 2h15v12H17z" fill="#cfcfcf" /><path d="M19.500 4h10v8h-10z" fill="#1414e0" /><path d="M18 15l17-2-2 4H15z" fill="#e0e0e0" /><path d="M3 20h15v12H3z" fill="#cfcfcf" /><path d="M5.500 22h10v8h-10z" fill="#1414e0" /><path d="M3 32l17-2-2 5H1z" fill="#e0e0e0" /><path d="M26 7 13 16h5l-10 10 15-9h-5z" fill="#f7f316" /></g></svg></App2>
      <App2><svg width="36" height="36" viewBox="0 0 36 36"><rect width="36" height="36" rx="4" fill="#2b8cf4" /><path d="M5 8h9a5 5 0 0 1 0 10.500H9.500M12.500 18.500l8.500 10M7.300 18v11.500" fill="none" stroke="#fff" strokeWidth="4.600" /><path d="M24.500 6l2.700 5.500L30 6M24.500 20v-4a2.700 2.700 0 0 1 5.400 0v4M30 24.500h-3.500a2.500 2.500 0 0 0 0 5H30" fill="none" stroke="#fff" strokeWidth="1.300" /></svg></App2>
      <div className="ml-[2px] flex h-full w-[67px] shrink-0 flex-col justify-end bg-[#58655b]">
        <div className="relative flex grow items-center pl-[18px]">
          <TeamsLogo w={34} />
          <div className="absolute top-[27px] left-[33px] flex size-6 items-center justify-center rounded-full bg-[#c42b1c] text-[16px] leading-none">1</div>
        </div>
        <div className="h-[3px] bg-[#76b9ed]" />
      </div>
      <div className="ml-px flex h-full w-[5px] shrink-0 flex-col justify-end bg-[#47524a]"><div className="h-[3px] bg-[#6ba5d2]" /></div>
      <svg width="34" height="35" viewBox="0 0 34 35" className="ml-[72px] shrink-0"><defs><linearGradient id="st" x1="0" x2="1"><stop offset="0" stopColor="#12800f" /><stop offset="1" stopColor="#6fd015" /></linearGradient></defs><path d="M1 21c10-2 17-7 23-13l-3-3V1h13v13h-4l-3-2.500C21 18 12 23.500 1 25z" fill="url(#st)" /><path d="M1 31.500c2-2 5-2 5 0V34H1zM10 29c2-2 6-2 6 0v5h-6zM19 25c2-2 6-2 6 0v9h-6zM28 17.500l6-2V34h-6z" fill="url(#st)" /></svg>
      <Fit w={95} className="mt-[3px] ml-[13px] text-[20px] leading-7">Nifty bank</Fit>
      <Fit w={68} className="mt-[3px] ml-[14px] text-[20px] leading-7 text-[#16c60c]">+1.23%</Fit>
      <div className="ml-[38px] shrink-0"><Caret /></div>
      <div className="ml-[19px] shrink-0"><CamTray w={18} /></div>
      <div className="ml-[17px] shrink-0"><MicTray w={16} /></div>
      <Ico w={25} vb="0 0 25 25" sw={1.400} className="ml-[17px]"><path d="M17 23 1 20V4l23-3v13M6.500 11c1-4 6-5 8.500-2M15 6v3h-3M15.500 13.500c-1 4-6 5-8.500 2M7 18.500v-3h3" /><circle cx="18.500" cy="19" r="5.500" fill="#ff9a0c" stroke="none" /></Ico>
      <div className="ml-[11px] shrink-0"><NetTray w={24} /></div>
      <Ico w={25} h={20} vb="0 0 25 20" sw={1.300} className="ml-[12px]"><rect x="6.500" y="6" width="15.500" height="11" fill="#fff" /><path d="M24 9.500v5" /><path d="M2.500 1v3M7 1v3M1 4.500h7.500v3a3.500 3.500 0 0 1-7.500 0zM4.700 11v5h3" fill="#2f3123" /></Ico>
      <div className="ml-[11px] shrink-0"><VolTray w={24} /></div>
      <div className="ml-[13px] flex w-[40px] shrink-0 flex-col items-center pt-px text-[17px] leading-[27.500px]"><Fit w={33}>ENG</Fit><Fit w={17}>IN</Fit></div>
      <div className="ml-[13px] flex w-[92px] shrink-0 flex-col items-center pt-px text-[17px] leading-[28px]"><Fit w={74}>12:08 PM</Fit><Fit w={84}>6/19/2024</Fit></div>
      <div className="ml-[6px] flex h-full w-[60px] shrink-0 items-center justify-center bg-[#404236]">
        <Ico w={24} h={25} vb="0 0 24 25" sw={1.500}><path d="M1 1h22v19h-7.500L12 24l-3.500-4H1z" strokeLinejoin="miter" /></Ico>
      </div>
      <div className="ml-[11px] h-full w-[2px] bg-[#85877e]" />
    </footer>
  );
}

/* ---------- Page ---------- */

export default function App() {
  return (
    <div className="relative flex h-[1080px] w-[1920px] flex-col overflow-hidden bg-[#1f1f1f] font-['Open_Sans','Noto_Sans',sans-serif]">
      <TitleBar />
      <MeetingBar />
      <main className="mt-[6px] mb-[6px] ml-[182px] flex h-[871px] w-[1556px] shrink-0 flex-col">
        <PdfTabs />
        <PdfToolbar />
        <div className="flex h-[727px] shrink-0 bg-[#f4f4f4]">
          <div className="w-[131px] shrink-0"><Palette /></div>
          <Slide />
          <div className="w-[53px] shrink-0 border-l border-[#cfcfcf]" />
          <div className="flex w-[22px] shrink-0 flex-col items-center border-r border-[#dcdcdc] bg-[#ececec] pt-[9px] pb-[7px] text-[#555]">
            <Ico w={9} h={6} vb="0 0 9 6" sw={1.600}><path d="m1 5 3.500-4L8 5" /></Ico>
            <div className="mt-[220px] h-[21px] w-[19px] bg-[#c6c6c6]" />
            <div className="grow" />
            <Ico w={9} h={6} vb="0 0 9 6" sw={1.600}><path d="m1 1 3.500 4L8 1" /></Ico>
          </div>
          <SidePanel />
        </div>
        <InnerTaskbar />
      </main>
      <HostTaskbar />

      <div className="absolute top-[966px] left-[18px] flex h-9 w-[142px] items-center justify-center rounded-[6px] bg-[#0f0f0f] text-[17.500px] leading-6 text-white"><Fit w={125}>Ashwini Dongre</Fit></div>
      <div className="absolute top-[966px] left-[172px] flex h-9 w-[98px] items-center rounded-[6px] bg-black/55 text-white">
        <div className="ml-[18px] h-px w-6 bg-white/30" />
        <Ico w={18} vb="0 0 18 18" sw={1.300} className="ml-[21px]"><path d="M9 1v16M1 9h16" /></Ico>
      </div>
      <div className="absolute top-[884px] left-[1870px] flex h-[130px] w-[44px] items-center justify-center bg-[#323232] pr-[3px] text-white">
        <Ico w={14} h={24} vb="0 0 14 24" sw={1.800}><path d="M12.500 2 2 12l10.500 10" /></Ico>
      </div>
    </div>
  );
}
